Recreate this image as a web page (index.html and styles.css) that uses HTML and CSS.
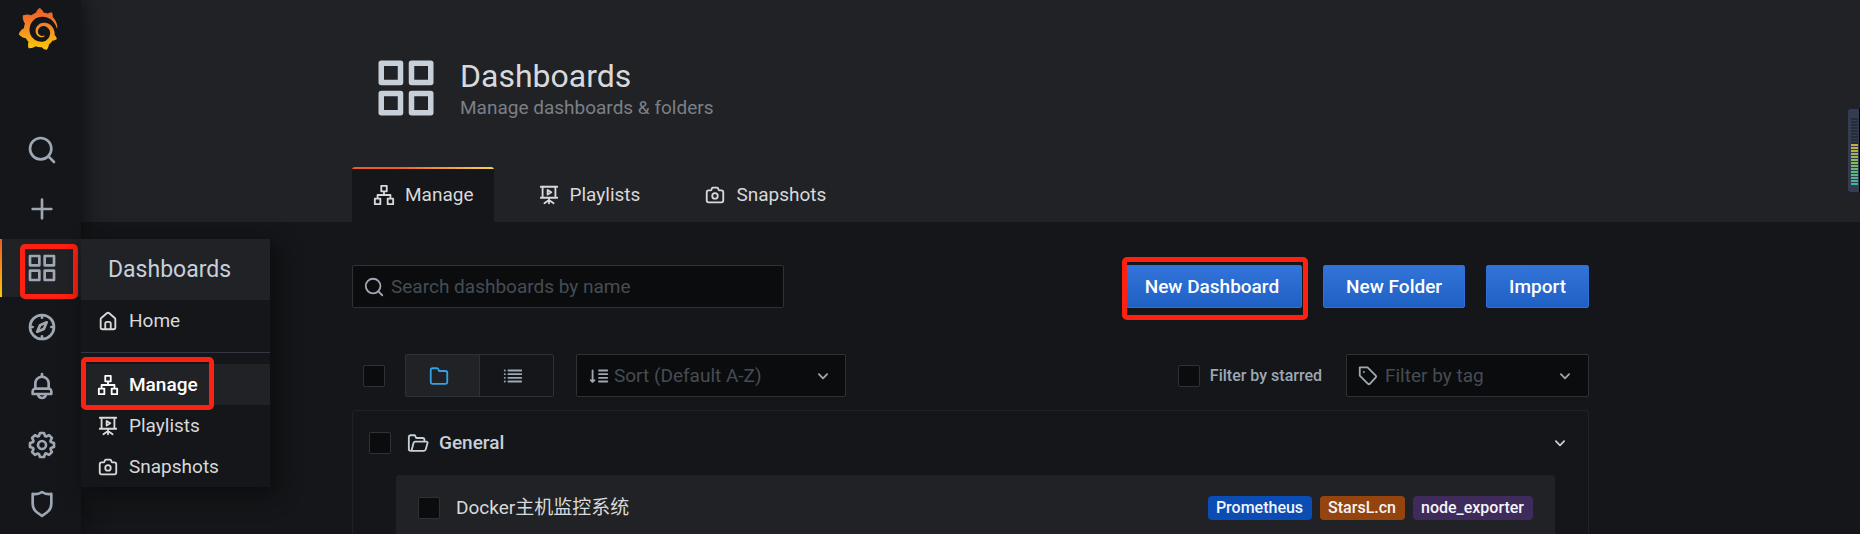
FILE: index.html
```html
<!DOCTYPE html>
<html lang="en">
<head>
<meta charset="utf-8">
<meta name="viewport" content="width=device-width, initial-scale=1">
<title>Dashboards - Grafana</title>
<link rel="stylesheet" href="styles.css">
</head>
<body>
<svg class="sprite" aria-hidden="true">
  <defs>
    <linearGradient id="flame" x1="0" y1="0" x2="0" y2="1">
      <stop offset="0" stop-color="#f05a28"/><stop offset="0.35" stop-color="#f47b2a"/><stop offset="1" stop-color="#fbca0a"/>
    </linearGradient>
    <symbol id="i-search" viewBox="0 0 24 24"><g class="line"><circle cx="11" cy="11" r="8"/><path d="M17 17l4 4"/></g></symbol>
    <symbol id="i-plus" viewBox="0 0 24 24"><path class="line" d="M12 5v14M5 12h14"/></symbol>
    <symbol id="i-apps" viewBox="0 0 24 24"><path class="line" d="M3 3h7v7H3zM14 3h7v7h-7zM3 14h7v7H3zM14 14h7v7h-7z"/></symbol>
    <symbol id="i-compass" viewBox="0 0 24 24"><path d="M12,2A10,10,0,1,0,22,12,10,10,0,0,0,12,2Zm1,17.93V19a1,1,0,0,0-2,0v.93A8,8,0,0,1,4.07,13H5a1,1,0,0,0,0-2H4.07A8,8,0,0,1,11,4.07V5a1,1,0,0,0,2,0V4.07A8,8,0,0,1,19.93,11H19a1,1,0,0,0,0,2h.93A8,8,0,0,1,13,19.93ZM15.14,7.55l-5,2.12a1,1,0,0,0-.52.52l-2.12,5a1,1,0,0,0,.21,1.1,1,1,0,0,0,.7.29.93.93,0,0,0,.4-.08l5-2.12a1,1,0,0,0,.52-.52l2.12-5a1,1,0,0,0-1.31-1.31Zm-2.49,5.1-2.28,1,1-2.28,2.28-1Z"/></symbol>
    <symbol id="i-bell" viewBox="0 0 24 24"><path d="M18,13.18V10a6,6,0,0,0-5-5.91V3a1,1,0,0,0-2,0V4.09A6,6,0,0,0,6,10v3.18A3,3,0,0,0,4,16v2a1,1,0,0,0,1,1H8.14a4,4,0,0,0,7.72,0H19a1,1,0,0,0,1-1V16A3,3,0,0,0,18,13.18ZM8,10a4,4,0,0,1,8,0v3H8Zm4,10a2,2,0,0,1-1.72-1h3.44A2,2,0,0,1,12,20Zm6-3H6V16a1,1,0,0,1,1-1H17a1,1,0,0,1,1,1Z"/></symbol>
    <symbol id="i-cog" viewBox="0 0 24 24"><path d="M21.32,9.55l-1.89-.63.89-1.78A1,1,0,0,0,20.13,6L18,3.87a1,1,0,0,0-1.15-.19l-1.78.89-.63-1.89A1,1,0,0,0,13.5,2h-3a1,1,0,0,0-.95.68L8.92,4.57,7.14,3.68A1,1,0,0,0,6,3.87L3.87,6a1,1,0,0,0-.19,1.15l.89,1.78-1.89.63A1,1,0,0,0,2,10.5v3a1,1,0,0,0,.68.95l1.89.63-.89,1.78A1,1,0,0,0,3.87,18L6,20.13a1,1,0,0,0,1.15.19l1.78-.89.63,1.89a1,1,0,0,0,.95.68h3a1,1,0,0,0,.95-.68l.63-1.89,1.78.89A1,1,0,0,0,18,20.13L20.13,18a1,1,0,0,0,.19-1.15l-.89-1.78,1.89-.63A1,1,0,0,0,22,13.5v-3A1,1,0,0,0,21.32,9.55ZM20,12.78l-1.2.4A2,2,0,0,0,17.64,16l.57,1.14-1.1,1.1L16,17.64a2,2,0,0,0-2.79,1.16l-.4,1.2H11.22l-.4-1.2A2,2,0,0,0,8,17.64l-1.14.57-1.1-1.1L6.36,16A2,2,0,0,0,5.2,13.18L4,12.78V11.22l1.2-.4A2,2,0,0,0,6.36,8L5.79,6.89l1.1-1.1L8,6.36A2,2,0,0,0,10.82,5.2l.4-1.2h1.56l.4,1.2A2,2,0,0,0,16,6.36l1.14-.57,1.1,1.1L17.64,8a2,2,0,0,0,1.16,2.79l1.2.4ZM12,8a4,4,0,1,0,4,4A4,4,0,0,0,12,8Zm0,6a2,2,0,1,1,2-2A2,2,0,0,1,12,14Z"/></symbol>
    <symbol id="i-shield" viewBox="0 0 24 24"><path d="M19.63,3.65a1,1,0,0,0-.84-.2,8,8,0,0,1-6.22-1.27,1,1,0,0,0-1.14,0A8,8,0,0,1,5.21,3.45a1,1,0,0,0-.84.2A1,1,0,0,0,4,4.43v7.45a9,9,0,0,0,3.77,7.33l3.65,2.6a1,1,0,0,0,1.16,0l3.65-2.6A9,9,0,0,0,20,11.88V4.43A1,1,0,0,0,19.63,3.65ZM18,11.88a7,7,0,0,1-2.93,5.7L12,19.77,8.93,17.58A7,7,0,0,1,6,11.88V5.58a10,10,0,0,0,6-1.39,10,10,0,0,0,6,1.39Z"/></symbol>
    <symbol id="i-home" viewBox="0 0 24 24"><path d="M20,8h0L14,2.74a3,3,0,0,0-4,0L4,8a3,3,0,0,0-1,2.26V19a3,3,0,0,0,3,3H18a3,3,0,0,0,3-3V10.25A3,3,0,0,0,20,8ZM14,20H10V15a1,1,0,0,1,1-1h2a1,1,0,0,1,1,1Zm5-1a1,1,0,0,1-1,1H16V15a3,3,0,0,0-3-3H11a3,3,0,0,0-3,3v5H6a1,1,0,0,1-1-1V10.25a1,1,0,0,1,.34-.75l6-5.25a1,1,0,0,1,1.32,0l6,5.25a1,1,0,0,1,.34.75Z"/></symbol>
    <symbol id="i-sitemap" viewBox="0 0 24 24"><path class="line" d="M9 2h6v6H9zM2 16h6v6H2zM16 16h6v6h-6zM12 8v4M5 16v-4h14v4"/></symbol>
    <symbol id="i-playlist" viewBox="0 0 24 24"><g class="line"><path d="M3 3h18M5 3v12M19 3v12M3 15h18M12 15v6M12 17.500l-5 3.500M12 17.500l5 3.500"/><path d="M10.500 6.500v5l4-2.500z"/></g></symbol>
    <symbol id="i-camera" viewBox="0 0 24 24"><g class="line"><path d="M5 7h2c.7 0 1-.3 1.200-1l.3-1c.3-.7.700-1 1.400-1h4.200c.7 0 1.100.3 1.400 1l.3 1c.2.700.5 1 1.200 1h2a2 2 0 0 1 2 2v9a2 2 0 0 1-2 2H5a2 2 0 0 1-2-2V9a2 2 0 0 1 2-2z"/><circle cx="12" cy="13" r="3"/></g></symbol>
    <symbol id="i-folder" viewBox="0 0 24 24"><path d="M19,5.5H12.72l-.32-1a3,3,0,0,0-2.84-2H5a3,3,0,0,0-3,3v13a3,3,0,0,0,3,3H19a3,3,0,0,0,3-3V8.5A3,3,0,0,0,19,5.5Zm1,13a1,1,0,0,1-1,1H5a1,1,0,0,1-1-1V5.500a1,1,0,0,1,1-1H9.560a1,1,0,0,1,.95.68l.54,1.640A1,1,0,0,0,12,7.500h7a1,1,0,0,1,1,1Z"/></symbol>
    <symbol id="i-folder-open" viewBox="0 0 24 24"><path class="line" d="M4 20.500a2 2 0 0 1-2-2V5.500a2 2 0 0 1 2-2h4.500L10 6.500h7a2 2 0 0 1 2 2v2M4 20.500h14.500c1 0 1.700-.5 1.900-1.500l2-7c.2-1-.2-1.500-1.200-1.500H9c-1 0-1.600.5-1.900 1.500L5.300 19c-.2.900-.6 1.500-1.300 1.500z"/></symbol>
    <symbol id="i-list" viewBox="0 0 24 24"><path class="line" d="M7 6h14M7 10h14M7 14h14M7 18h14M3 6h.1M3 10h.1M3 14h.1M3 18h.1"/></symbol>
    <symbol id="i-sort" viewBox="0 0 24 24"><path class="line" d="M5 6v12M3 16.500L5 18.500 7 16.500M12 6h9M12 10h9M12 14h9M12 18h9"/></symbol>
    <symbol id="i-tag" viewBox="0 0 24 24"><g class="line"><path d="M3 2.500h8.500l9 9a1.500 1.500 0 0 1 0 2L14 20.500a1.500 1.500 0 0 1-2 0L3 11.500z"/><path d="M7.500 7.500h.1"/></g></symbol>
    <symbol id="i-chevron" viewBox="0 0 24 24"><path class="line" d="M7.500 10l4.500 4.500 4.500-4.500"/></symbol>
  </defs>
</svg>

<div class="app">
  <aside class="sidebar">
    <a class="logo" href="#" aria-label="Grafana home">
      <svg viewBox="0 0 24 24"><path fill="url(#flame)" d="M23.02 10.59a8.578 8.578 0 0 0-.862-3.034 8.911 8.911 0 0 0-1.789-2.445c.337-1.342-.413-2.505-.413-2.505-1.292-.08-2.113.4-2.416.62-.052-.02-.102-.044-.154-.064-.22-.089-.446-.172-.677-.247-.231-.073-.47-.14-.711-.197a9.867 9.867 0 0 0-.875-.161C14.557.753 12.94 0 12.94 0c-1.804 1.145-2.147 2.744-2.147 2.744l-.018.093c-.098.029-.2.057-.298.088-.138.042-.275.094-.413.143-.138.055-.275.107-.41.166a8.869 8.869 0 0 0-1.557.87l-.063-.029c-2.497-.955-4.716.195-4.716.195-.203 2.658.996 4.33 1.235 4.636a11.608 11.608 0 0 0-.607 2.635C1.636 12.677.953 15.014.953 15.014c1.926 2.214 4.171 2.351 4.171 2.351.003-.002.006-.002.006-.005.285.509.615.994.986 1.446.156.19.32.371.488.548-.704 2.009.099 3.68.099 3.68 2.144.08 3.553-.937 3.849-1.173a9.784 9.784 0 0 0 3.164.501h.08l.055-.003.107-.002.103-.005.003.002c1.01 1.44 2.788 1.646 2.788 1.646 1.264-1.332 1.337-2.653 1.337-2.94v-.058c0-.02-.003-.039-.003-.06.265-.187.52-.387.758-.6a7.875 7.875 0 0 0 1.415-1.7c1.43.083 2.437-.885 2.437-.885-.236-1.49-1.085-2.216-1.264-2.354l-.018-.013-.016-.013a.217.217 0 0 1-.031-.02c.008-.092.016-.18.02-.27.011-.162.016-.323.016-.48v-.253l-.005-.098-.008-.135a1.891 1.891 0 0 0-.01-.13c-.003-.042-.008-.083-.013-.125l-.016-.124-.018-.122a6.215 6.215 0 0 0-2.032-3.73 6.015 6.015 0 0 0-3.222-1.46 6.292 6.292 0 0 0-.85-.048l-.107.002h-.063l-.044.003-.104.008a4.777 4.777 0 0 0-3.335 1.695c-.332.4-.592.84-.768 1.297a4.594 4.594 0 0 0-.312 1.817l.003.091c.005.055.007.11.013.164a3.615 3.615 0 0 0 .698 1.82 3.53 3.53 0 0 0 1.827 1.282c.33.098.66.14.971.137.039 0 .078 0 .114-.002l.063-.003c.02 0 .041-.003.062-.003.034-.002.065-.007.099-.01.007 0 .018-.003.028-.003l.031-.005.06-.008a1.18 1.18 0 0 0 .112-.02c.036-.008.072-.013.109-.024a2.634 2.634 0 0 0 .914-.415c.028-.02.056-.041.085-.065a.248.248 0 0 0 .039-.35.244.244 0 0 0-.309-.06l-.078.042c-.09.044-.184.083-.283.116a2.476 2.476 0 0 1-.475.096c-.028.003-.054.006-.083.006l-.083.002c-.026 0-.054 0-.08-.002l-.102-.006h-.012l-.024.006c-.016-.003-.031-.003-.044-.006-.031-.002-.06-.007-.091-.01a2.59 2.59 0 0 1-.724-.213 2.557 2.557 0 0 1-.667-.438 2.52 2.52 0 0 1-.805-1.475 2.306 2.306 0 0 1-.029-.444l.006-.122v-.023l.002-.031c.003-.021.003-.04.005-.06a3.163 3.163 0 0 1 1.352-2.29 3.12 3.12 0 0 1 .937-.43 2.946 2.946 0 0 1 .776-.101h.06l.07.002.045.003h.026l.07.005a4.041 4.041 0 0 1 1.635.49 3.94 3.94 0 0 1 1.602 1.662 3.77 3.77 0 0 1 .397 1.414l.005.076.003.075c.002.026.002.05.002.075 0 .024.003.052 0 .07v.065l-.002.073-.008.174a6.195 6.195 0 0 1-.08.639 5.1 5.1 0 0 1-.267.927 5.31 5.31 0 0 1-.624 1.13 5.052 5.052 0 0 1-3.237 2.014 4.82 4.82 0 0 1-.649.066l-.039.003h-.287a6.607 6.607 0 0 1-1.716-.265 6.776 6.776 0 0 1-3.4-2.274 6.75 6.75 0 0 1-.746-1.15 6.616 6.616 0 0 1-.714-2.596l-.005-.083-.002-.02v-.056l-.003-.073v-.096l-.003-.104v-.07l.003-.163c.008-.22.026-.45.054-.678a8.707 8.707 0 0 1 .28-1.355c.128-.444.286-.872.473-1.277a7.04 7.04 0 0 1 1.456-2.1 5.925 5.925 0 0 1 .953-.763c.169-.111.343-.213.524-.306.089-.05.182-.091.273-.135.047-.02.093-.042.138-.062a7.177 7.177 0 0 1 .714-.267l.145-.045c.049-.015.098-.026.148-.041.098-.029.197-.052.296-.076.049-.013.1-.02.15-.033l.15-.032.151-.028.076-.013.075-.01.153-.024c.057-.01.114-.013.171-.023l.169-.021c.036-.003.073-.008.106-.01l.073-.008.036-.003.042-.002c.057-.003.114-.008.171-.01l.086-.006h.023l.037-.003.145-.007a7.999 7.999 0 0 1 1.708.125 7.917 7.917 0 0 1 2.048.68 8.253 8.253 0 0 1 1.672 1.09l.09.077.089.078c.06.052.114.107.171.159.057.052.112.106.166.16.052.055.107.107.159.164a8.671 8.671 0 0 1 1.41 1.978c.012.026.028.052.04.078l.04.078.075.156c.023.051.05.1.07.153l.065.15a8.848 8.848 0 0 1 .45 1.34.19.19 0 0 0 .201.142.186.186 0 0 0 .172-.184c.01-.246.002-.532-.024-.856z"/></svg>
    </a>
    <nav class="nav" aria-label="Main">
      <a class="nav-link" href="#" aria-label="Search"><svg class="icon icon-nav"><use href="#i-search"/></svg></a>
      <a class="nav-link" href="#" aria-label="Create"><svg class="icon icon-nav"><use href="#i-plus"/></svg></a>
      <div class="nav-active">
        <a class="nav-link" href="#" aria-label="Dashboards"><svg class="icon icon-nav"><use href="#i-apps"/></svg></a>
        <span class="mark mark-nav"></span>
        <div class="menu">
          <a class="menu-title" href="#">Dashboards</a>
          <a class="menu-item" href="#"><svg class="icon"><use href="#i-home"/></svg>Home</a>
          <hr class="menu-divider">
          <a class="menu-item menu-item-current" href="#"><svg class="icon"><use href="#i-sitemap"/></svg>Manage<span class="mark mark-menu"></span></a>
          <a class="menu-item" href="#"><svg class="icon"><use href="#i-playlist"/></svg>Playlists</a>
          <a class="menu-item" href="#"><svg class="icon"><use href="#i-camera"/></svg>Snapshots</a>
        </div>
      </div>
      <a class="nav-link" href="#" aria-label="Explore"><svg class="icon icon-nav"><use href="#i-compass"/></svg></a>
      <a class="nav-link" href="#" aria-label="Alerting"><svg class="icon icon-nav"><use href="#i-bell"/></svg></a>
      <a class="nav-link" href="#" aria-label="Configuration"><svg class="icon icon-nav"><use href="#i-cog"/></svg></a>
      <a class="nav-link" href="#" aria-label="Server admin"><svg class="icon icon-nav"><use href="#i-shield"/></svg></a>
    </nav>
  </aside>

  <main class="main">
    <header class="page-header">
      <div class="container">
        <div class="heading">
          <svg class="icon icon-page"><use href="#i-apps"/></svg>
          <div>
            <h1 class="title">Dashboards</h1>
            <p class="subtitle">Manage dashboards &amp; folders</p>
          </div>
        </div>
        <nav class="tabs" aria-label="Dashboards sections">
          <a class="tab tab-active" href="#" aria-current="page"><svg class="icon"><use href="#i-sitemap"/></svg>Manage</a>
          <a class="tab" href="#"><svg class="icon"><use href="#i-playlist"/></svg>Playlists</a>
          <a class="tab" href="#"><svg class="icon"><use href="#i-camera"/></svg>Snapshots</a>
        </nav>
      </div>
    </header>

    <div class="container content">
      <div class="actions">
        <label class="field field-search">
          <svg class="icon"><use href="#i-search"/></svg>
          <input class="control" type="text" placeholder="Search dashboards by name" aria-label="Search dashboards by name">
        </label>
        <div class="buttons">
          <span class="marked"><button class="button" type="button">New Dashboard</button><span class="mark mark-button"></span></span>
          <button class="button" type="button">New Folder</button>
          <button class="button" type="button">Import</button>
        </div>
      </div>

      <div class="filters">
        <input class="check" type="checkbox" aria-label="Select all">
        <div class="toggle">
          <button class="toggle-button toggle-on" type="button" aria-label="Folder view"><svg class="icon"><use href="#i-folder"/></svg></button>
          <button class="toggle-button" type="button" aria-label="List view"><svg class="icon"><use href="#i-list"/></svg></button>
        </div>
        <label class="field field-sort">
          <svg class="icon"><use href="#i-sort"/></svg>
          <select class="control" aria-label="Sort"><option>Sort (Default A-Z)</option></select>
          <svg class="icon"><use href="#i-chevron"/></svg>
        </label>
        <label class="starred"><input class="check" type="checkbox">Filter by starred</label>
        <label class="field field-tag">
          <svg class="icon"><use href="#i-tag"/></svg>
          <select class="control" aria-label="Filter by tag"><option>Filter by tag</option></select>
          <svg class="icon"><use href="#i-chevron"/></svg>
        </label>
      </div>

      <section class="folder">
        <div class="folder-head">
          <input class="check" type="checkbox" aria-label="Select General">
          <svg class="icon"><use href="#i-folder-open"/></svg>
          <span class="folder-name">General</span>
          <svg class="icon"><use href="#i-chevron"/></svg>
        </div>
        <div class="dashboard">
          <input class="check" type="checkbox" aria-label="Select Docker主机监控系统">
          <a class="dashboard-name" href="#">Docker主机监控系统</a>
          <div class="tags">
            <span class="tag tag-blue">Prometheus</span>
            <span class="tag tag-orange">StarsL.cn</span>
            <span class="tag tag-purple">node_exporter</span>
          </div>
        </div>
      </section>
    </div>
  </main>
  <div class="meter"><div class="meter-off"></div><div class="meter-on"></div></div>
</div>
</body>
</html>
```
FILE: styles.css
```css
*, *::before { box-sizing: border-box; }

body {
  margin: 0;
  background: #141619;
  color: #c7d0d9;
  font: 19px/24px Roboto, "Noto Sans CJK SC", sans-serif;
}

a { color: inherit; text-decoration: none; }
button, input, select { font: inherit; margin: 0; }

.sprite { position: absolute; width: 0; height: 0; }
.icon { width: 22px; height: 22px; flex: none; fill: currentColor; }
.line { fill: none; stroke: currentColor; stroke-width: 2; stroke-linecap: round; stroke-linejoin: round; }
.icon-nav { width: 32px; height: 32px; }
.icon-page { width: 66px; height: 66px; color: #c7d0d9; }

.app { display: flex; height: 100vh; overflow: hidden; position: relative; }

/* Sidebar */
.sidebar {
  position: relative;
  z-index: 2;
  flex: none;
  width: 81px;
  background: #141619;
  box-shadow: 0 0 20px #0b0c0e;
}
.logo { display: block; height: 121px; padding: 8px 0 0 17px; }
.logo svg { display: block; width: 42px; height: 42px; }
.nav { display: flex; flex-direction: column; gap: 1px; color: #9fa7b3; }
.nav-link { display: flex; align-items: center; height: 58px; padding-left: 26px; }
.nav-active { position: relative; background: #202226; }
.nav-active::before {
  content: "";
  position: absolute;
  inset: 0 auto 0 0;
  width: 2px;
  background: linear-gradient(#f05a28, #fbca0a);
}

.menu {
  position: absolute;
  top: 0;
  left: 100%;
  width: 189px;
  background: #141619;
  box-shadow: 6px 6px 20px #0b0c0e;
}
.menu-title {
  display: flex;
  align-items: center;
  height: 61px;
  padding-left: 27px;
  background: #202226;
  color: #c7d0d9;
  font-size: 23px;
}
.menu-item {
  position: relative;
  display: flex;
  align-items: center;
  gap: 10px;
  height: 41px;
  padding-left: 16px;
  color: #d8d9da;
}
.menu-item-current { background: #202226; color: #fff; font-weight: 500; }
.menu-divider { height: 1px; margin: 11px 0; border: 0; background: #343741; }

/* Red highlight frames */
.mark { position: absolute; border: 5px solid #ff2012; border-radius: 5px; pointer-events: none; }
.mark-nav { inset: 5px 3px -2px 20px; }
.mark-menu { inset: -7px 56px -5px 0; }
.mark-button { inset: -8px -6px -12px 0; }

/* Page header */
.main { flex: 1; min-width: 0; }
.page-header { background: #202226; }
.container { max-width: 1237px; margin: 0 auto; }
.heading { display: flex; align-items: center; gap: 21px; height: 167px; padding: 8px 0 0 21px; }
.title { margin: 0; color: #d8d9da; font-size: 32px; font-weight: 400; line-height: 40px; }
.subtitle { margin: 0; color: #7b8087; }
.tabs { display: flex; gap: 23px; }
.tab {
  position: relative;
  display: flex;
  align-items: center;
  gap: 10px;
  height: 55px;
  padding: 0 20px 0 21px;
  color: #d8d9da;
}
.tab-active { background: #141619; border-radius: 3px 3px 0 0; overflow: hidden; }
.tab-active::before {
  content: "";
  position: absolute;
  inset: 0 0 auto;
  height: 2px;
  background: linear-gradient(to right, #f05a28 30%, #f7d358);
}

/* Toolbar */
.content { padding-top: 43px; }
.actions { display: flex; justify-content: space-between; gap: 21px; }
.field {
  display: flex;
  align-items: center;
  height: 43px;
  padding: 0 10px;
  gap: 6px;
  border: 1px solid #2c3235;
  border-radius: 2px;
  background: #0b0c0e;
  color: #9fa7b3;
}
.control {
  flex: 1;
  min-width: 0;
  padding: 0;
  border: 0;
  outline: 0;
  background: none;
  color: #464c54;
  appearance: none;
}
.control::placeholder { color: #464c54; opacity: 1; }
.field-search { flex: 0 1 432px; }
.buttons { display: flex; gap: 21px; }
.marked { position: relative; }
.button {
  height: 43px;
  padding: 0 22px;
  border: 1px solid #2f6fd6;
  border-radius: 2px;
  background: linear-gradient(#3274d9, #1f60c4);
  color: #fff;
  font-weight: 500;
  white-space: nowrap;
}

.filters { display: flex; align-items: center; padding: 46px 0 13px 11px; }
.check {
  flex: none;
  width: 22px;
  height: 22px;
  border: 1px solid #2c3235;
  border-radius: 2px;
  background: #0b0c0e;
  appearance: none;
}
.toggle { display: flex; margin: 0 22px 0 20px; border: 1px solid #2c3235; border-radius: 2px; }
.toggle-button {
  display: flex;
  align-items: center;
  justify-content: center;
  width: 73px;
  height: 41px;
  padding: 0 8px 0 0;
  border: 0;
  background: #141619;
  color: #9fa7b3;
}
.toggle-on { width: 74px; background: #202226; color: #33a2e5; border-right: 1px solid #2c3235; }
.field-sort { flex: 0 1 270px; gap: 4px; padding: 0 11px; }
.starred {
  display: flex;
  align-items: center;
  gap: 10px;
  margin: 0 24px 0 auto;
  color: #9fa7b3;
  font-size: 16px;
  font-weight: 500;
}
.field-tag { flex: 0 1 243px; padding: 0 12px 0 10px; }

/* Folder list */
.folder { border: 1px solid #202226; border-radius: 3px; }
.folder-head { display: flex; align-items: center; height: 64px; padding: 0 17px 0 16px; }
.folder-head .icon { margin-left: 16px; }
.folder-name { flex: 1; margin-left: 10px; font-weight: 500; }
.dashboard {
  display: flex;
  align-items: center;
  gap: 16px;
  height: 66px;
  margin: 0 33px 0 43px;
  padding: 0 22px;
  border-radius: 3px;
  background: #202226;
}
.dashboard-name { flex: 1; color: #d8d9da; }
.tags { display: flex; gap: 8px; }
.tag { padding: 0 9px 0 8px; border-radius: 4px; color: #f4f5f8; font-size: 16px; font-weight: 500; }
.tag-blue { background: #0b4cb5; }
.tag-orange { background: #96440d; }
.tag-purple { background: #3f2b5b; }

/* Level meter docked on the window edge */
.meter {
  position: absolute;
  top: 108px;
  right: 0;
  width: 13px;
  height: 85px;
  padding: 9px 1px 8px 3px;
  border: 1px solid #1b2236;
  border-right-color: #000;
  border-radius: 4px 0 0 4px;
  background: #343c50;
}
.meter-off { height: 26px; background: repeating-linear-gradient(#262c3c 0 2px, #343c50 2px 3px); }
.meter-on {
  height: 42px;
  background:
    repeating-linear-gradient(transparent 0 2px, #343c50 2px 3px),
    linear-gradient(#d0a93c, #7dbb62 45%, #35b5a5);
}
```
